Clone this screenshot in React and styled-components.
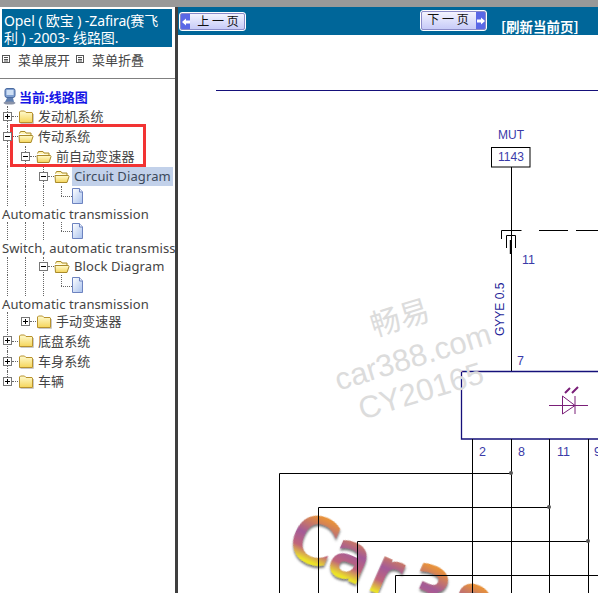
import React from 'react';
import styled, { createGlobalStyle } from 'styled-components';

const Global = createGlobalStyle`
  html, body { margin: 0; padding: 0; background: #fff; }
  body { font-family: "Noto Sans", "Noto Sans CJK SC", sans-serif; }
`;
const CJK = `"Noto Sans", "Noto Sans CJK SC", sans-serif`;

const Page = styled.div`
  width: 598px; height: 593px; overflow: hidden; position: relative;
  display: flex; flex-direction: column; background: #fff;
`;
const TopBar = styled.div`height: 7px; background: #999; flex: none;`;
const Body = styled.div`flex: 1; display: flex; min-height: 0;`;
const Sidebar = styled.aside`
  width: 175px; flex: none; border-right: 3px solid #3f3f3f; position: relative;
  overflow: hidden; background: #fff;
`;
const TitleBlock = styled.div`
  margin: 2px 3px 0 2px; height: 38px; background: #006699; color: #fff;
  font: 14px/17px ${CJK}; padding: 3px 0 0 2px; box-sizing: border-box; overflow: hidden;
  white-space: nowrap; letter-spacing: -0.1px;
`;
const MenuBar = styled.div`
  display: flex; align-items: center; height: 24px; padding-left: 2px;
  font: 13px ${CJK}; color: #444;
`;
const MenuIcon = styled.svg`width: 8px; height: 8px; flex: none; margin-right: 8px;`;
const MenuLabel = styled.span`margin-right: 6px; white-space: nowrap;`;
const Divider = styled.div`height: 1px; background: #808080; margin-top: 7px;`;
const Tree = styled.div`padding-top: 7px; font: 13px ${CJK}; color: #444;`;
const Current = styled.div`
  display: flex; align-items: center; height: 20px; padding-left: 2px; color: #1414e6;
  font-weight: 700; gap: 2px; white-space: nowrap;
`;
const Row = styled.div`display: flex; align-items: stretch; height: ${p => p.$h}px; white-space: nowrap;`;
const Guide = styled.span`
  width: 18px; flex: none; position: relative;
  &::before { content: ""; position: absolute; left: 7px; top: 0; bottom: 0; border-left: 1px dotted #666; }
`;
const Expander = styled.span`
  width: 18px; flex: none; position: relative; display: flex; align-items: center;
  &::before {
    content: ""; position: absolute; left: 7px; top: 0; bottom: ${p => (p.$last ? '50%' : 0)};
    border-left: 1px dotted #666; display: ${p => (p.$noLine ? 'none' : 'block')};
  }
  &::after { content: ""; position: absolute; left: 12px; right: 0; top: 50%; border-top: 1px dotted #666; }
`;
const Box = styled.span`
  position: relative; z-index: 1; margin-left: 3px; width: 9px; height: 9px; box-sizing: border-box;
  border: 1px solid #777; background: #fff; display: block;
  &::before { content: ""; position: absolute; left: 1px; right: 1px; top: 3px; height: 1px; background: #000; }
  &::after {
    content: ""; position: absolute; top: 1px; bottom: 1px; left: 3px; width: 1px; background: #000;
    display: ${p => (p.$open ? 'none' : 'block')};
  }
`;
const FolderWrap = styled.span`width: 16px; flex: none; display: flex; align-items: center;`;
const Label = styled.span`
  display: flex; align-items: center; margin-left: 2px; padding: 0 2px 1px 2px; height: 18px; align-self: center;
  letter-spacing: 0.12px;
  background: ${p => (p.$sel ? '#c2d1ea' : 'transparent')}; color: ${p => (p.$sel ? '#3c4a5c' : '#444')};
`;
const FileStem = styled.span`
  width: 11px; flex: none; position: relative; margin-left: 7px;
  &::before { content: ""; position: absolute; left: 0; top: 0; height: 50%; border-left: 1px dotted #666; }
  &::after { content: ""; position: absolute; left: 0; right: 0; top: 50%; border-top: 1px dotted #666; }
`;
const Caption = styled.div`
  height: ${p => p.$h}px; line-height: ${p => p.$h}px; padding-left: 2px; white-space: nowrap; color: #444; letter-spacing: 0.1px;
`;
const Highlight = styled.div`
  position: absolute; left: 10px; top: 117px; width: 136px; height: 43px; box-sizing: border-box;
  border: 3px solid #f23333; pointer-events: none;
`;
const Main = styled.main`flex: 1; display: flex; flex-direction: column; min-width: 0;`;
const Header = styled.header`
  height: 28px; flex: none; background: #006699; display: flex; align-items: flex-start;
`;
const PageButton = styled.div`
  width: 67px; box-sizing: border-box; height: ${p => p.$h}px; margin: ${p => p.$m};
  display: flex; align-items: stretch; flex-direction: ${p => (p.$next ? 'row-reverse' : 'row')};
  border: 1px solid #fff; outline: 1px solid #8b8bc8; outline-offset: -2px; border-radius: 3px; overflow: hidden;
  background: linear-gradient(#f6f6ff, #c9cdf8 90%);
`;
const ButtonCap = styled.span`
  width: 9px; flex: none; background: #5a68e6; display: flex; align-items: center; justify-content: center; margin: 1px;
`;
const ButtonText = styled.span`
  flex: 1; text-align: center; font: 12px/15px "Noto Sans CJK SC", sans-serif; color: #111;
`;
const Refresh = styled.span`
  margin: 11px 0 0 14px; font: 700 13.5px/16px "Noto Sans CJK SC", sans-serif; color: #fff; white-space: nowrap;
`;
const Canvas = styled.div`flex: 1; min-height: 0; overflow: hidden; background: #fff;`;
const Drawing = styled.svg`display: block; width: 420px; height: 558px;`;

const Folder = ({ open }) => (
  <svg width="16" height="15" viewBox="0 0 16 15">
    <defs>
      <linearGradient id="fg" x1="0" y1="0" x2="0" y2="1">
        <stop offset="0" stopColor="#fffbd0" /><stop offset="1" stopColor="#f5d55a" />
      </linearGradient>
    </defs>
    {open ? (
      <>
        <path d="M1.5 4.5 L2.5 2.5 H7 L8 4 H13 V6" fill="#fff3b0" stroke="#a98a2a" />
        <path d="M1.5 13.5 L1 6.5 H14.5 L15 7.5 L13 13.5 Z" fill="url(#fg)" stroke="#a98a2a" />
      </>
    ) : (
      <>
        <path d="M1.5 13.5 V3 L2.5 2 H6.5 L8 3.5 H14 L14.5 4 V13.5 Z" fill="url(#fg)" stroke="#b8922e" />
        <path d="M2.5 14.5 H15.5 V5" fill="none" stroke="#c9c9c9" />
      </>
    )}
  </svg>
);

const FileIcon = () => (
  <svg width="12" height="17" viewBox="0 0 12 17">
    <defs>
      <linearGradient id="pg" x1="0" y1="0" x2="1" y2="1">
        <stop offset="0" stopColor="#fff" /><stop offset="1" stopColor="#a9c2ee" />
      </linearGradient>
    </defs>
    <path d="M0.5 0.5 H7.5 L10.5 4 V15.5 H0.5 Z" fill="url(#pg)" stroke="#6d83c0" />
    <path d="M7.5 0.5 V4 H10.5" fill="#e6eefb" stroke="#6d83c0" />
  </svg>
);

const Computer = () => (
  <svg width="15" height="17" viewBox="0 0 15 17">
    <rect x="3" y="0.5" width="10" height="9" rx="2" fill="#7f9fd0" stroke="#4a6aa0" />
    <rect x="4.5" y="2" width="7" height="5" fill="#cfe0f5" />
    <path d="M5 10 L3 14 H12 L11 10 Z" fill="#5f7fb0" />
    <ellipse cx="7.5" cy="15" rx="6" ry="1.6" fill="#8a93a8" />
  </svg>
);

const Menu = () => (
  <MenuIcon viewBox="0 0 8 8">
    <rect x="0.5" y="0.5" width="7" height="7" fill="#fff" stroke="#555" />
    <path d="M2 2.5H6M2 4.5H6M2 6H6" stroke="#555" />
  </MenuIcon>
);

const rows = [
  { k: 'f', lv: 0, h: 20, open: false, text: '发动机系统' },
  { k: 'f', lv: 0, h: 20, open: true, text: '传动系统' },
  { k: 'f', lv: 1, h: 20, open: true, text: '前自动变速器', guides: 1 },
  { k: 'f', lv: 2, h: 20, open: true, text: 'Circuit Diagram', sel: true, guides: 2 },
  { k: 'p', h: 20, guides: 3 },
  { k: 'c', h: 16, text: 'Automatic transmission' },
  { k: 'p', h: 18, guides: 3 },
  { k: 'c', h: 17, text: 'Switch, automatic transmission' },
  { k: 'f', lv: 2, h: 18, open: true, text: 'Block Diagram', guides: 2 },
  { k: 'p', h: 21, guides: 2, inset: true },
  { k: 'c', h: 16, text: 'Automatic transmission' },
  { k: 'f', lv: 1, h: 18, open: false, text: '手动变速器', guides: 1 },
  { k: 'f', lv: 0, h: 21, open: false, text: '底盘系统' },
  { k: 'f', lv: 0, h: 20, open: false, text: '车身系统' },
  { k: 'f', lv: 0, h: 20, open: false, text: '车辆', last: true },
];

const Guides = ({ n }) => Array.from({ length: n }, (_, i) => <Guide key={i} />);

const TreeRow = ({ r }) => {
  if (r.k === 'c') return <Caption $h={r.h}>{r.text}</Caption>;
  if (r.k === 'p') {
    return (
      <Row $h={r.h}>
        <Guides n={r.inset ? 3 : r.guides} />
        <FileStem />
        <FolderWrap><FileIcon /></FolderWrap>
      </Row>
    );
  }
  return (
    <Row $h={r.h}>
      <Guides n={r.guides || 0} />
      <Expander $last={r.last} $noLine={r.lv > 0 && !r.open}>
        <Box $open={r.open} />
      </Expander>
      <FolderWrap><Folder open={r.open} /></FolderWrap>
      <Label $sel={r.sel}>{r.text}</Label>
    </Row>
  );
};

const wire = '#000';
const navy = '#15107a';
const ink = '#3a3aa8';

const Schematic = () => (
  <Drawing viewBox="178 35 420 558">
    <defs>
      <linearGradient id="logo" gradientUnits="userSpaceOnUse" x1="0" y1="-46" x2="0" y2="0">
        <stop offset="0" stopColor="#e8923a" />
        <stop offset="0.45" stopColor="#a35a98" />
        <stop offset="0.75" stopColor="#c0657a" />
        <stop offset="1" stopColor="#ece428" />
      </linearGradient>
      <filter id="shadow" x="-20%" y="-20%" width="140%" height="140%">
        <feDropShadow dx="1" dy="2" stdDeviation="1.2" floodColor="#555" floodOpacity="0.8" />
      </filter>
    </defs>

    <g transform="translate(285 551) rotate(24)" filter="url(#shadow)">
      <text fontFamily="DejaVu Sans" fontSize="62" fill="url(#logo)" stroke="url(#logo)" strokeWidth="3" dx="0 1 7 12 6 4">Car388</text>
    </g>

    <path d="M216 90.5H598" stroke={navy} strokeWidth="1.2" />
    <text x="498" y="139" fontFamily="Liberation Sans" fontSize="12" fill={ink}>MUT</text>
    <rect x="491.5" y="147.5" width="38.5" height="19.5" fill="#fff" stroke={wire} />
    <text x="498" y="161" fontFamily="Liberation Sans" fontSize="12" fill={ink}>1143</text>
    <path d="M511.5 167V371" stroke={wire} />
    <path d="M501.5 239V230.5H521.5M539 230.5H568M576 230.5H598" fill="none" stroke={wire} />
    <path d="M506.5 248V235.5H515.5V248" fill="none" stroke={wire} />
    <path d="M510.8 240V254" stroke={wire} strokeWidth="2" />
    <text x="522" y="264" fontFamily="Liberation Sans" fontSize="12.5" fill={ink}>11</text>
    <text transform="translate(504 336) rotate(-90)" fontFamily="Liberation Sans" fontSize="12" fill="#1f1f98">GYYE 0.5</text>
    <text x="517" y="364.5" fontFamily="Liberation Sans" fontSize="12.5" fill={ink}>7</text>
    <path d="M598 371.5H461.5V439H598" fill="none" stroke={navy} strokeWidth="1.3" />
    <g stroke="#7a1f78" fill="none">
      <path d="M549 405.5H588M575 396V414" />
      <path d="M562.5 396V414L575 405.5Z" />
      <path d="M565 393L570 388M572 393L578 387" strokeWidth="2" />
    </g>

    {[472.5, 511.5, 549.5, 588.5].map(x => <path key={x} d={`M${x} 439V593`} stroke={wire} />)}
    <g fontFamily="Liberation Sans" fontSize="12.5" fill={ink}>
      <text x="479" y="455.5">2</text>
      <text x="518" y="455.5">8</text>
      <text x="557" y="455.5">11</text>
      <text x="594" y="455.5">9</text>
    </g>
    <path d="M279.5 593V473.5H511M318.5 593V507.5H549M357.5 593V541.5H588M395.5 593V575.5H598" fill="none" stroke={wire} />
    {[[511, 473], [549, 507], [588, 541]].map(([x, y]) => <circle key={x} cx={x} cy={y} r="2" fill="#555" />)}

    <g fontFamily="Liberation Sans, Noto Sans CJK SC, sans-serif" fill="#dcdcdc" fontSize="31">
      <text transform="translate(403 328) rotate(-17)" textAnchor="middle" fontFamily="Noto Sans CJK SC" fontSize="30">畅易</text>
      <text transform="translate(416 367) rotate(-17)" textAnchor="middle">car388.com</text>
      <text transform="translate(424 401) rotate(-17)" textAnchor="middle">CY20165</text>
    </g>
  </Drawing>
);

export default function App() {
  return (
    <Page>
      <Global />
      <TopBar />
      <Body>
        <Sidebar>
          <TitleBlock>Opel ( 欧宝 ) -Zafira(赛飞<br />利 ) -2003- 线路图.</TitleBlock>
          <MenuBar>
            <Menu /><MenuLabel>菜单展开</MenuLabel>
            <Menu /><MenuLabel>菜单折叠</MenuLabel>
          </MenuBar>
          <Divider />
          <Tree>
            <Current><Computer />当前:线路图</Current>
            {rows.map((r, i) => <TreeRow key={i} r={r} />)}
          </Tree>
          <Highlight />
        </Sidebar>
        <Main>
          <Header>
            <PageButton $m="5px 0 0 1px" $h={19}>
              <ButtonCap><svg width="8" height="8" viewBox="0 0 8 8"><path d="M0 4L4 0.5V2.5H8V5.5H4V7.5Z" fill="#fff" /></svg></ButtonCap>
              <ButtonText>上 一 页</ButtonText>
            </PageButton>
            <PageButton $m="3px 0 0 174px" $h={21} $next>
              <ButtonCap><svg width="8" height="8" viewBox="0 0 8 8"><path d="M8 4L4 0.5V2.5H0V5.5H4V7.5Z" fill="#fff" /></svg></ButtonCap>
              <ButtonText>下 一 页</ButtonText>
            </PageButton>
            <Refresh>[刷新当前页]</Refresh>
          </Header>
          <Canvas><Schematic /></Canvas>
        </Main>
      </Body>
    </Page>
  );
}
